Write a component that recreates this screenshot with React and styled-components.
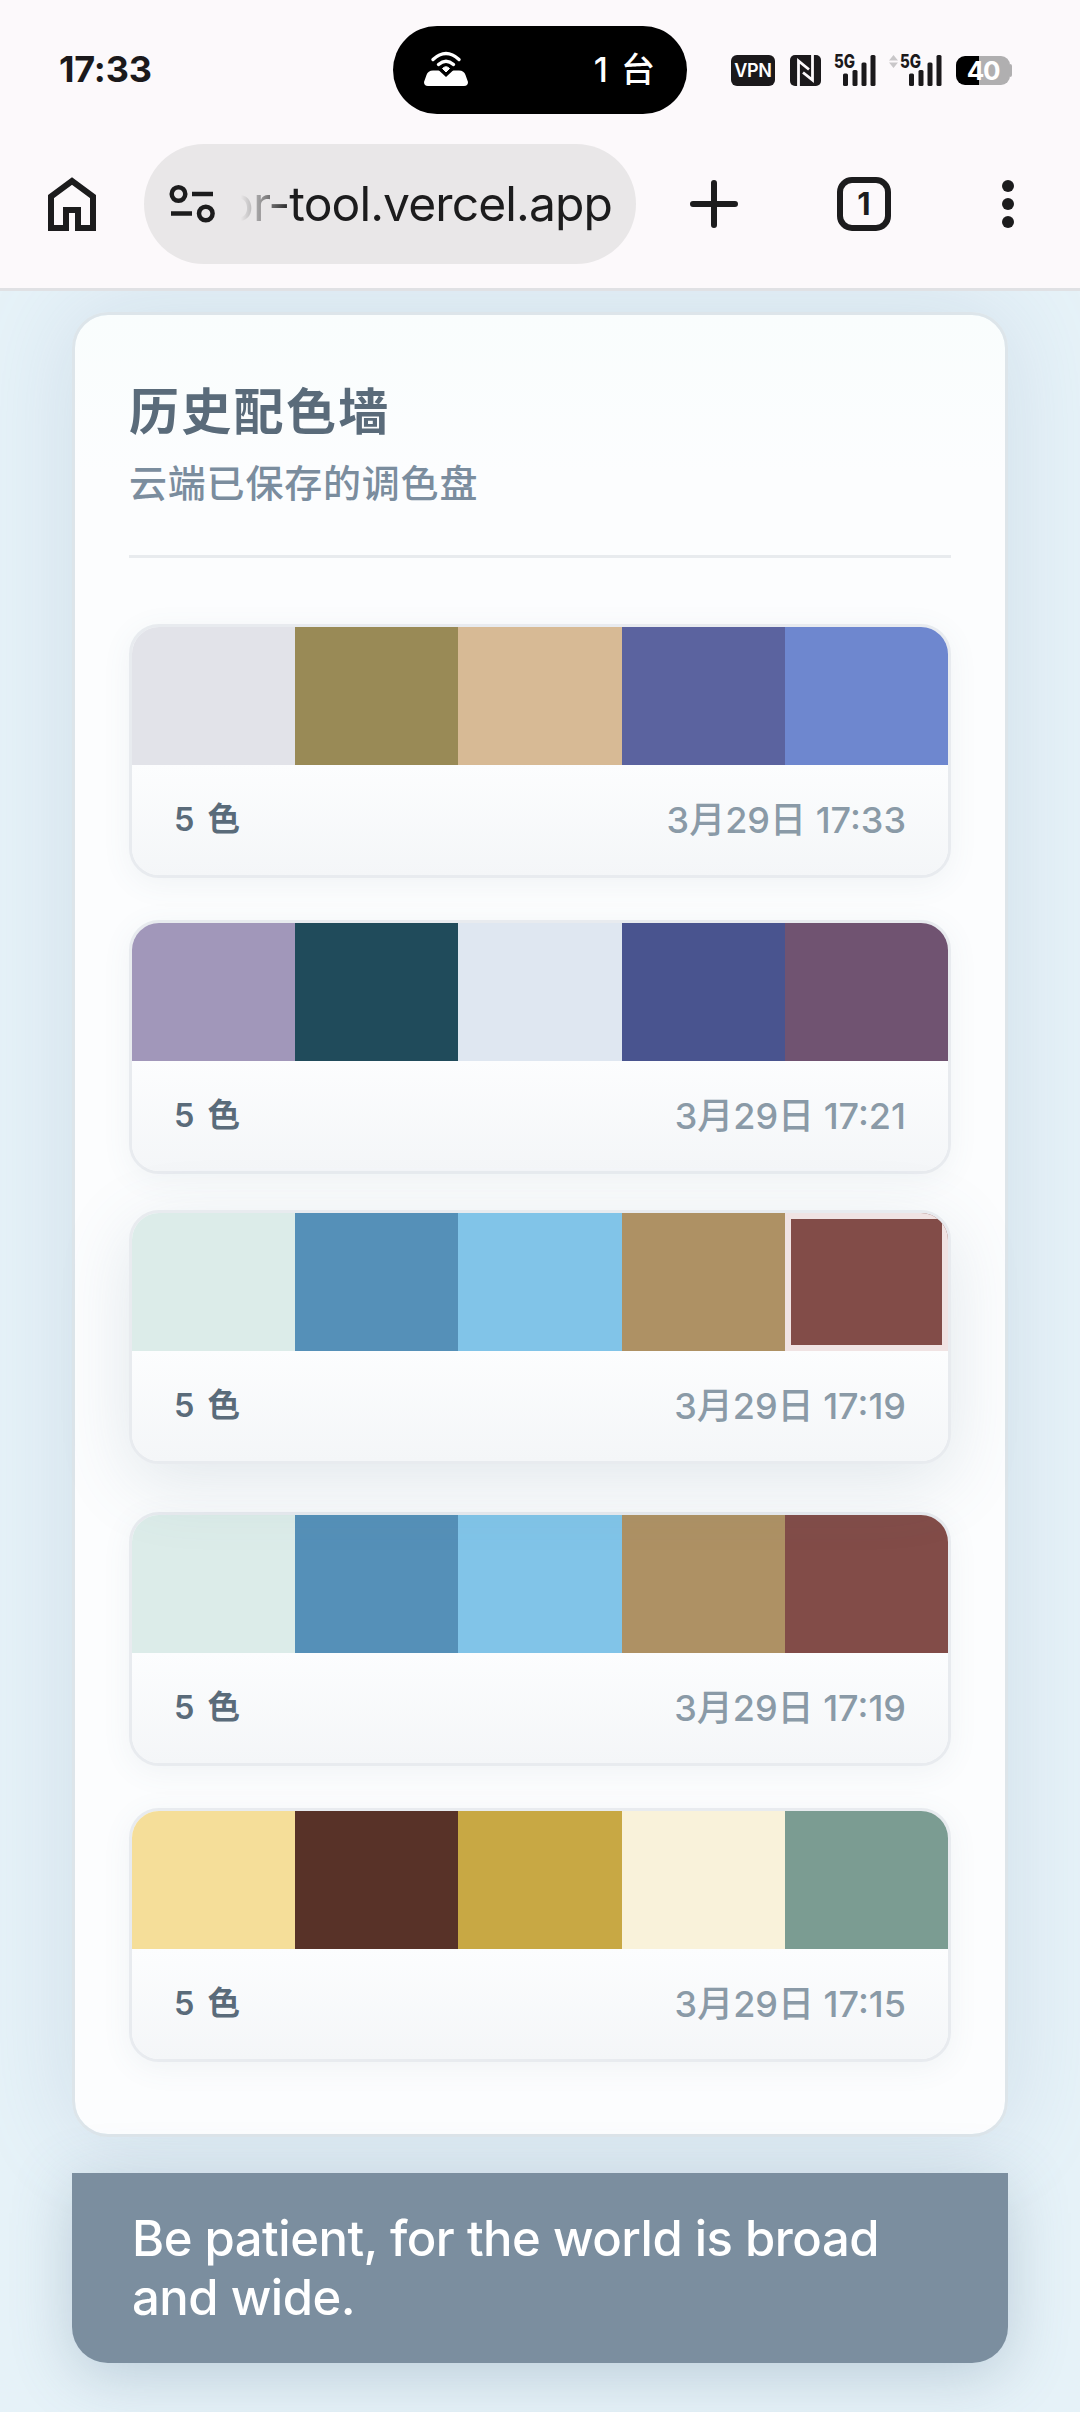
import React from "react";
import styled, { createGlobalStyle, css } from "styled-components";

const Global = createGlobalStyle`
  *, *::before, *::after { box-sizing: border-box; }
  body {
    margin: 0;
    background: #e6f2f8;
    font-family: Inter, "Noto Sans CJK SC", sans-serif;
    -webkit-font-smoothing: antialiased;
  }
  p, h1, h2 { margin: 0; }
`;

const Screen = styled.div`
  width: 1080px;
  height: 2412px;
  overflow: hidden;
  display: flex;
  flex-direction: column;
`;

const BrowserChrome = styled.header`
  position: relative;
  z-index: 1;
  flex: none;
  height: 291px;
  background: #fcf9fb;
  border-bottom: 3px solid #e0e1e4;
`;

const StatusBar = styled.div`
  height: 144px;
  padding: 0 68px 4px 59px;
  display: flex;
  align-items: center;
  color: #1b191b;
`;

const Clock = styled.span`
  width: 334px;
  font-size: 36px;
  line-height: 40px;
  font-weight: 650;
  letter-spacing: -0.2px;
  padding-bottom: 2px;
`;

const Island = styled.div`
  width: 294px;
  height: 88px;
  padding: 0 32px 0 31px;
  border-radius: 44px;
  background: #000;
  color: #fff;
  display: flex;
  align-items: center;
  justify-content: space-between;
`;

const DeviceCount = styled.span`
  padding-bottom: 1px;
  font-size: 34px;
  line-height: 48px;
  font-weight: 500;
  word-spacing: 4px;
`;

const StatusIcons = styled.div`
  margin-left: auto;
  display: flex;
  align-items: center;
`;

const VpnBadge = styled.span`
  width: 44px;
  height: 31px;
  margin-right: 15px;
  border-radius: 6px;
  background: #1b191b;
  color: #fff;
  display: flex;
  align-items: center;
  justify-content: center;
  font: 600 18px/31px Inter, sans-serif;
  letter-spacing: -0.3px;
`;

const Battery = styled.span`
  width: 54px;
  height: 29px;
  margin-left: 14px;
  border-radius: 9px;
  background: linear-gradient(to right, #000 23px, #b0afb0 23px);
  color: #fff;
  display: flex;
  align-items: center;
  justify-content: center;
  font: 650 26px/29px Inter, sans-serif;
  letter-spacing: -1.2px;
`;

const BatteryCap = styled.span`
  width: 2px;
  height: 13px;
  border-radius: 0 3px 3px 0;
  background: #b0afb0;
`;

const Toolbar = styled.div`
  height: 120px;
  padding: 0 66px 0 42px;
  display: flex;
  align-items: center;
  color: #1c1c1d;
`;

const UrlPill = styled.div`
  width: 492px;
  height: 120px;
  margin-left: 42px;
  padding: 0 24px 0 24px;
  border-radius: 60px;
  background: #e9e7e8;
  display: flex;
  align-items: center;
`;

const UrlText = styled.div`
  width: 371px;
  margin-left: 24px;
  display: flex;
  justify-content: flex-end;
  white-space: nowrap;
  font: 400 48px/60px Inter, sans-serif;
  letter-spacing: -0.9px;
  -webkit-mask-image: linear-gradient(to right, transparent, #000 50px);
  mask-image: linear-gradient(to right, transparent, #000 50px);
`;

const ToolIcon = styled.svg`
  flex: none;
  display: block;
  overflow: visible;
  margin-left: ${(p) => p.$gap || 0}px;
`;

const TabCount = styled.span`
  width: 54px;
  height: 54px;
  margin-left: 93px;
  border: 6px solid #1c1c1d;
  border-radius: 15px;
  display: flex;
  align-items: center;
  justify-content: center;
  font: 700 31px/42px Inter, sans-serif;
`;

const Page = styled.main`
  flex: 1;
  padding: 21px 72px 0;
  display: flex;
  flex-direction: column;
  gap: 36px;
`;

const HistoryPanel = styled.section`
  height: 1825px;
  padding: 54px;
  border: 3px solid #dde5ea;
  border-radius: 36px;
  background: linear-gradient(#f9fdfd 0, #fcfdfe 160px, #fcfdfe 100%);
  background-clip: padding-box;
  box-shadow: 0 0 96px rgba(120, 145, 180, 0.2);
`;

const PanelHeader = styled.div`
  height: 189px;
  border-bottom: 3px solid #e8ebee;
`;

const Title = styled.h1`
  padding-top: 6px;
  color: #5a6b7a;
  font-size: 50px;
  line-height: 74px;
  font-weight: 700;
  letter-spacing: 2.3px;
`;

const Subtitle = styled.p`
  padding-top: 6px;
  color: #7b8d9e;
  font-size: 38px;
  line-height: 56px;
  font-weight: 500;
  letter-spacing: 0.8px;
`;

const PaletteList = styled.div`
  margin-top: 66px;
  display: flex;
  flex-direction: column;
  gap: 42px;
`;

const PaletteCard = styled.article`
  height: 254px;
  border: 3px solid #e8ebef;
  border-radius: 30px;
  overflow: hidden;
  background: #fbfcfd;
  box-shadow: 0 6px 30px rgba(90, 107, 122, 0.07);
  ${(p) =>
    p.$raised &&
    css`
      transform: translateY(-6px);
      box-shadow: 0 18px 72px rgba(90, 120, 135, 0.16);
    `}
`;

const Swatches = styled.div`
  height: 138px;
  display: flex;
`;

const Swatch = styled.div`
  flex: 1;
  background: ${(p) => p.$color};
  ${(p) => p.$active && css`box-shadow: inset 0 0 0 6px #f0e3e3;`}
`;

const CardFooter = styled.div`
  height: 110px;
  padding: 0 42px;
  display: flex;
  align-items: center;
  justify-content: space-between;
  background: linear-gradient(#fcfdfe, #f4f6f8);
`;

const Count = styled.span`
  padding-bottom: 1px;
  color: #5a6b7a;
  font-size: 32.5px;
  line-height: 48px;
  font-weight: 600;
  letter-spacing: 1.4px;
  word-spacing: 2px;
`;

const Time = styled.time`
  color: #8a9aa7;
  font-size: 36px;
  line-height: 48px;
  font-weight: 500;
`;

const Toast = styled.aside`
  height: 190px;
  padding: 36px 60px;
  border-radius: 0 0 36px 36px;
  background: #7b8e9f;
  color: #fff;
  box-shadow: 0 12px 60px rgba(90, 120, 145, 0.3);
  font: 500 49px/59px Inter, sans-serif;
  letter-spacing: -0.5px;
`;

const palettes = [
  { colors: ["#e2e3e9", "#998a56", "#d7ba95", "#5b639f", "#6e87cf"], time: "3月29日 17:33" },
  { colors: ["#a197ba", "#204b5b", "#dfe7f1", "#49548f", "#705371"], time: "3月29日 17:21" },
  { colors: ["#dcece9", "#5590b8", "#81c4e8", "#ae9164", "#824c48"], time: "3月29日 17:19", active: 4 },
  { colors: ["#dcece9", "#5590b8", "#81c4e8", "#ae9164", "#824c48"], time: "3月29日 17:19" },
  { colors: ["#f5de99", "#583228", "#c8a844", "#f9f2da", "#7b9c92"], time: "3月29日 17:15" },
];

const SignalLabel = styled.text`
  font: 800 18.5px Inter, sans-serif;
`;

function HotspotIcon() {
  return (
    <ToolIcon width="44" height="36" viewBox="0 0 44 36">
      <path d="M9 18.5H35Q40 18.5 41.5 23L44 30Q44 34 40 34H4Q0 34 0 30L2.5 23Q4 18.5 9 18.5Z" fill="#fff" />
      <path d="M14.5 18L22 25L29.5 18V12H14.5Z" fill="#000" />
      <path d="M18.5 16.5Q22 13 25.5 16.5L22 20Z" fill="#fff" stroke="#fff" strokeWidth="1" strokeLinejoin="round" />
      <g fill="none" stroke="#fff" strokeWidth="3.4" strokeLinecap="round">
        <path d="M9 7.5Q22-4.5 35 7.5" />
        <path d="M14.5 12.5Q22 6 29.5 12.5" />
      </g>
    </ToolIcon>
  );
}

function NfcIcon() {
  return (
    <ToolIcon width="31" height="31" viewBox="0 0 31 31">
      <rect width="31" height="31" rx="5" fill="#1b191b" />
      <path d="M8.5 31V6L19 14.5M22.5 0V25L13 17.5" fill="none" stroke="#fcf9fb" strokeWidth="2.8" />
    </ToolIcon>
  );
}

function SignalIcon({ gap, arrows }) {
  const x = arrows ? 12 : 0;
  return (
    <ToolIcon width={41 + x} height="33" viewBox={`0 0 ${41 + x} 33`} $gap={gap}>
      {arrows && <path d="M0 6.5L4.5 1L9 6.5ZM0 8.5H9L4.5 14Z" fill="#c9c7c9" />}
      <SignalLabel x={x - 1} y="13.5" textLength="21" lengthAdjust="spacingAndGlyphs" fill="#1b191b">
        5G
      </SignalLabel>
      <g fill="#1b191b">
        <rect x={x + 8} y="19.5" width="5" height="12.5" rx="1.5" />
        <rect x={x + 17.5} y="16" width="5" height="16" rx="1.5" />
        <rect x={x + 26.5} y="8.5" width="5" height="23.5" rx="1.5" />
        <rect x={x + 35.500} y="1" width="5" height="31" rx="1.5" />
      </g>
    </ToolIcon>
  );
}

export default function App() {
  return (
    <Screen>
      <Global />
      <BrowserChrome>
        <StatusBar>
          <Clock>17:33</Clock>
          <Island>
            <HotspotIcon />
            <DeviceCount>1 台</DeviceCount>
          </Island>
          <StatusIcons>
            <VpnBadge>VPN</VpnBadge>
            <NfcIcon />
            <SignalIcon gap={14} />
            <SignalIcon gap={13} arrows />
            <Battery>40</Battery>
            <BatteryCap />
          </StatusIcons>
        </StatusBar>
        <Toolbar>
          <ToolIcon width="60" height="60" viewBox="0 0 60 60">
            <path
              d="M9 54V22.5L30 7L51 22.5V54H36V36H24V54Z"
              fill="none"
              stroke="currentColor"
              strokeWidth="6"
            />
          </ToolIcon>
          <UrlPill>
            <ToolIcon width="49" height="44" viewBox="0 0 49 44">
              <g fill="none" stroke="currentColor" strokeWidth="4.5">
                <circle cx="10.5" cy="12" r="6.8" />
                <circle cx="37.8" cy="31.5" r="6.8" />
                <path d="M24 12H45M3 31.5H24" />
              </g>
            </ToolIcon>
            <UrlText>or-tool.vercel.app</UrlText>
          </UrlPill>
          <ToolIcon width="60" height="60" viewBox="0 0 60 60" $gap={48}>
            <path d="M30 9V51M9 30H51" stroke="currentColor" strokeWidth="6" strokeLinecap="round" />
          </ToolIcon>
          <TabCount>1</TabCount>
          <ToolIcon width="12" height="48" viewBox="0 0 12 48" $gap={111} fill="currentColor">
            <circle cx="6" cy="6" r="6" />
            <circle cx="6" cy="24" r="6" />
            <circle cx="6" cy="42" r="6" />
          </ToolIcon>
        </Toolbar>
      </BrowserChrome>
      <Page>
        <HistoryPanel>
          <PanelHeader>
            <Title>历史配色墙</Title>
            <Subtitle>云端已保存的调色盘</Subtitle>
          </PanelHeader>
          <PaletteList>
            {palettes.map((palette, i) => (
              <PaletteCard key={i} $raised={palette.active !== undefined}>
                <Swatches>
                  {palette.colors.map((color, j) => (
                    <Swatch key={color} $color={color} $active={palette.active === j} />
                  ))}
                </Swatches>
                <CardFooter>
                  <Count>{palette.colors.length} 色</Count>
                  <Time>{palette.time}</Time>
                </CardFooter>
              </PaletteCard>
            ))}
          </PaletteList>
        </HistoryPanel>
        <Toast>Be patient, for the world is broad and wide.</Toast>
      </Page>
    </Screen>
  );
}
